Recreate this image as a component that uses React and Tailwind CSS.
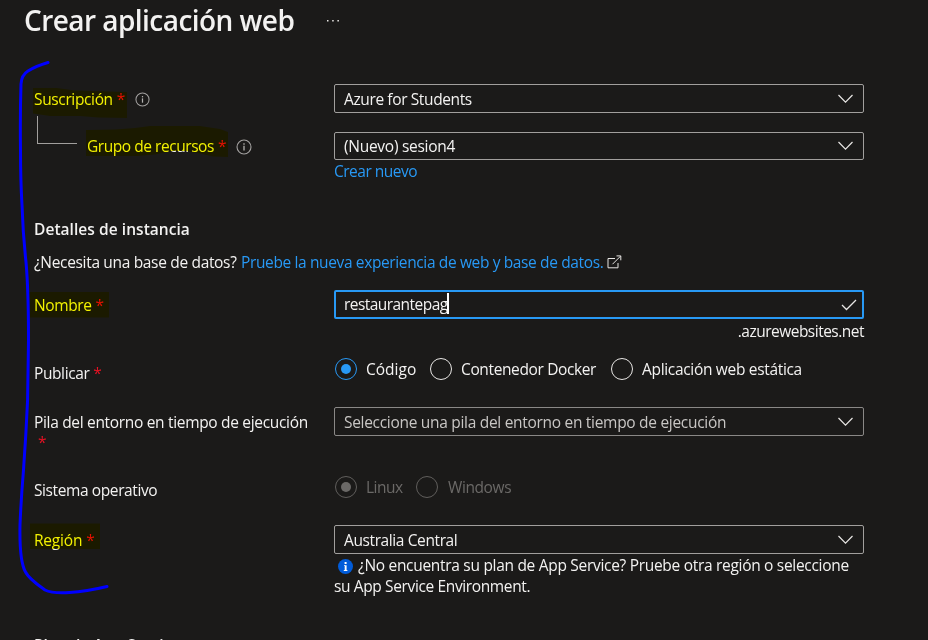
function InfoIcon({ className }) {
  return (
    <svg viewBox="0 0 16 16" className={className} fill="none">
      <circle cx="8" cy="8" r="7" stroke="#a3a1a0" strokeWidth="1.1" />
      <path d="M8 6.8v4.6" stroke="#b4b2b0" strokeWidth="1.3" />
      <path d="M8 4.3v1.4" stroke="#b4b2b0" strokeWidth="1.3" />
    </svg>
  );
}

function Chevron({ className = "" }) {
  return (
    <svg viewBox="0 0 16 10" className={`h-[10px] w-[16px] shrink-0 ${className}`} fill="none">
      <path d="M0.5 1L7.5 8.2l7-7.2" stroke="#e8e6e4" strokeWidth="1.2" />
    </svg>
  );
}

function Req({ className = "ml-[4px]" }) {
  return <span className={`text-[#e81123] ${className}`}>*</span>;
}

function Select({ children, className = "h-[29px] pt-[4px] border-[#a19f9d]" }) {
  return (
    <div className={`flex items-start justify-between rounded-[2px] border pr-[9px] pl-[9px] ${className}`}>
      {children}
      <Chevron className="mt-[5px]" />
    </div>
  );
}

function Radio({ checked, disabled }) {
  const ring = disabled ? "border-[#605e5c]" : checked ? "border-[#2899f5]" : "border-[#e8e6e4]";
  const dot = disabled ? "bg-[#6b6967]" : "bg-[#2899f5]";
  return (
    <span className={`flex size-[22px] shrink-0 items-center justify-center rounded-full border ${ring}`}>
      {checked && <span className={`size-[10px] rounded-full ${dot}`} />}
    </span>
  );
}

function Row({ label, children, className }) {
  return (
    <div className={`flex shrink-0 ${className}`}>
      <div className="w-[300px] shrink-0">{label}</div>
      <div className="w-[530px] shrink-0">{children}</div>
    </div>
  );
}

export default function App() {
  return (
    <div className="relative isolate flex h-[640px] w-[928px] flex-col overflow-hidden bg-[#1b1a19] pl-[34px] font-['Open_Sans','Noto_Sans',sans-serif] text-[15.5px] leading-[21px] whitespace-nowrap text-[#f3f2f1]">
      <header className="-ml-[10px] flex h-[84px] shrink-0 items-start">
        <h1 className="w-[302px] text-[28px] leading-[40px] font-semibold tracking-[-0.55px]">Crear aplicación web</h1>
        <svg viewBox="0 0 14 4" className="mt-[19px] h-[4px] w-[14px]" fill="#e8e6e4">
          <rect x="1" y="1" width="1.5" height="1.5" />
          <rect x="6.2" y="1" width="1.5" height="1.5" />
          <rect x="11.4" y="1" width="1.5" height="1.5" />
        </svg>
      </header>

      <Row
        className="h-[48px]"
        label={
          <div className="flex pt-[5px]">
            <span className="tracking-[-0.36px]">Suscripción</span>
            <Req />
            <InfoIcon className="mt-[3px] ml-[10px] size-[15px]" />
          </div>
        }
      >
        <Select><span className="tracking-[-0.38px]">Azure for Students</span></Select>
      </Row>

      <Row
        className="h-[87px]"
        label={
          <div className="flex">
            <span className="-mt-[16px] ml-[3px] h-[28px] w-[40px] border-b border-l border-[#a19f9d]" />
            <span className="mt-[4px] ml-[10px] tracking-[-0.45px]">Grupo de recursos</span>
            <Req className="mt-[4px] ml-[4px]" />
            <InfoIcon className="mt-[7px] ml-[10px] size-[16px]" />
          </div>
        }
      >
        <Select className="h-[28px] border-[#a19f9d] pt-[3px]"><span className="tracking-[-0.27px]">(Nuevo) sesion4</span></Select>
        <div className="mt-px tracking-[-0.5px] text-[#2899f5]">Crear nuevo</div>
      </Row>

      <h2 className="h-[33px] shrink-0 tracking-[0.05px] font-semibold">Detalles de instancia</h2>

      <div className="flex h-[38px] shrink-0">
        <span className="w-[207px] tracking-[-0.33px]">¿Necesita una base de datos?</span>
        <span className="tracking-[-0.37px] text-[#2899f5]">Pruebe la nueva experiencia de web y base de datos.</span>
        <svg viewBox="0 0 15 14" className="mt-[3px] ml-[4px] h-[14px] w-[15px]" fill="none" stroke="#e8e6e4" strokeWidth="1">
          <path d="M8 3.5H1v9.3h10V8" />
          <path d="M5.5 9.2L13.5 1.2M9.5 0.9H13.8v4.4" />
        </svg>
      </div>

      <Row className="h-[68px]" label={<div className="flex pt-[5px]"><span className="tracking-[-0.4px]">Nombre</span><Req /></div>}>
        <div className="flex h-[29px] items-start rounded-[2px] border-2 border-[#2899f5] pr-[5px] pl-[8px]">
          <span className="mt-[2px] tracking-[-0.55px]">restaurantepag</span>
          <span className="-ml-px mt-px h-[21px] w-[2px] bg-white" />
          <svg viewBox="0 0 16 12" className="mt-[7px] ml-auto h-[12px] w-[16px]" fill="none">
            <path d="M1 6l4.5 4.5L15 1" stroke="#e8e6e4" strokeWidth="1.3" />
          </svg>
        </div>
        <div className="mt-[2px] text-right tracking-[-0.51px]">.azurewebsites.net</div>
      </Row>

      <Row className="h-[49px]" label={<div className="flex pt-[5px]"><span className="tracking-[-0.4px]">Publicar</span><Req /></div>}>
        <div className="flex pl-px">
          <div className="flex w-[95px] gap-[9px]">
            <Radio checked />
            <span className="mt-px tracking-[0px]">Código</span>
          </div>
          <div className="flex w-[181px] gap-[9px]">
            <Radio />
            <span className="mt-px tracking-[-0.37px]">Contenedor Docker</span>
          </div>
          <div className="flex gap-[9px]">
            <Radio />
            <span className="mt-px tracking-[-0.32px]">Aplicación web estática</span>
          </div>
        </div>
      </Row>

      <Row
        className="h-[69px]"
        label={
          <div className="pt-[5px]">
            <div className="tracking-[-0.32px]">Pila del entorno en tiempo de ejecución</div>
            <div className="-mt-px"><Req className="ml-[4px]" /></div>
          </div>
        }
      >
        <Select className="h-[29px] border-[#8a8886] pt-[4px]"><span className="tracking-[-0.3px] text-[#c8c6c4]">Seleccione una pila del entorno en tiempo de ejecución</span></Select>
      </Row>

      <Row className="h-[49px]" label={<div className="pt-[4px] tracking-[-0.4px]">Sistema operativo</div>}>
        <div className="flex pl-px text-[#6b6967]">
          <div className="flex w-[81px] gap-[9px]">
            <Radio checked disabled />
            <span className="mt-px tracking-[-0.5px]">Linux</span>
          </div>
          <div className="flex gap-[10px]">
            <Radio disabled />
            <span className="mt-px tracking-[-0.4px]">Windows</span>
          </div>
        </div>
      </Row>

      <Row className="h-[110px]" label={<div className="flex pt-[5px]"><span className="tracking-[-0.2px]">Región</span><Req /></div>}>
        <Select><span className="tracking-[-0.39px]">Australia Central</span></Select>
        <div className="mt-px flex">
          <svg viewBox="0 0 15 15" className="mt-[4px] mr-[5px] ml-[4px] size-[15px]">
            <circle cx="7.5" cy="7.5" r="7.5" fill="#015cda" />
            <path d="M6.6 3h2v1.9h-2zM6 6.2h2.6v4.9h.8V12H5.8v-.9h.9V7.1H6z" fill="#fff" />
          </svg>
          <span className="tracking-[-0.3px]">¿No encuentra su plan de App Service? Pruebe otra región o seleccione</span>
        </div>
        <div className="tracking-[-0.37px]">su App Service Environment.</div>
      </Row>

      <h2 className="shrink-0 font-semibold">Plan de App Service</h2>

      {/* Highlighter marks */}
      <svg viewBox="0 0 928 640" className="pointer-events-none absolute inset-0 h-[640px] w-[928px] mix-blend-multiply" fill="#ffff00">
        <path d="M33 88H57L75 90.5L127 92V118L98 117.5L80 116H50L33 113.5Z" />
        <path d="M86 130L115 129.5L135 128L150 126H200L220 129L228 132V157L213 156.5L200 153.5L186 151H172L155 154.5L138 156H86Z" />
        <path d="M27 292H109V317.5H27Z" />
        <path d="M30 523.5H100V549H30Z" />
      </svg>

      {/* Pen stroke */}
      <svg viewBox="0 0 928 640" className="pointer-events-none absolute inset-0 h-[640px] w-[928px]" fill="none">
        <path
          d="M48 62.5Q36 66 28 71Q21.5 75 21 84Q20 115 20.5 150Q20.5 180 22 205Q23 235 26 262C28.5 290 28.5 310 28.5 340Q28 380 27.6 400Q26 435 23.5 470Q21 500 20 525C19.5 550 21.5 565 25.5 572C29 579 38 585 45 590C55 595 80 593 107 586.5"
          stroke="#0000ff"
          strokeWidth="3"
          strokeLinecap="round"
          strokeLinejoin="round"
        />
      </svg>
    </div>
  );
}
